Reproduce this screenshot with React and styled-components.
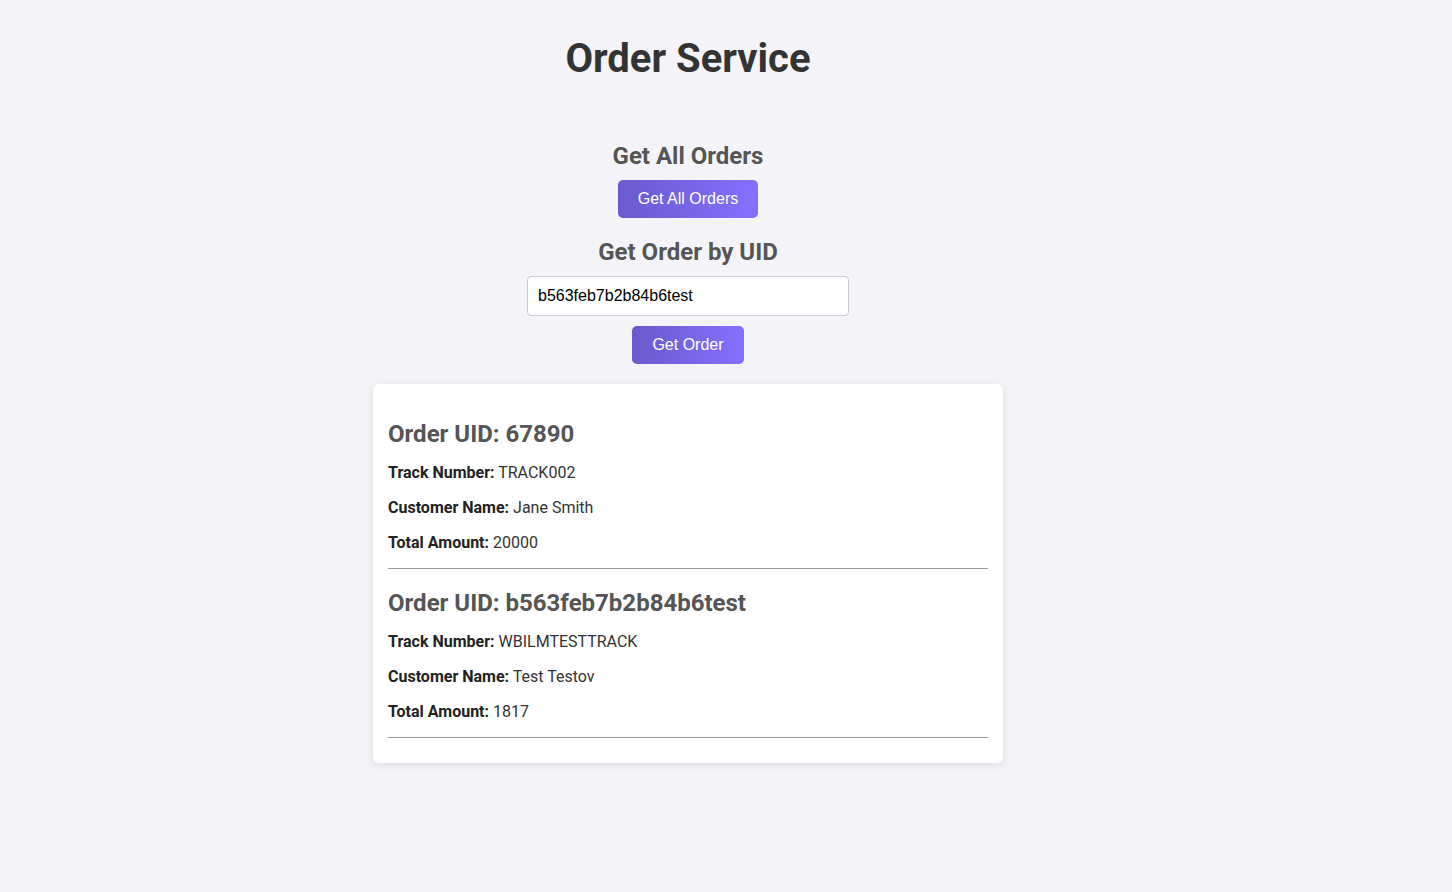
import React, { useState } from "react";
import styled, { createGlobalStyle } from "styled-components";

const GlobalStyle = createGlobalStyle`
  body {
    margin: 0;
    background: #f4f4f8;
    font-family: Roboto, "Liberation Sans", sans-serif;
    color: #333;
  }
`;

const Page = styled.div`
  padding: 35px 96px 40px 20px;
  display: flex;
  flex-direction: column;
  align-items: center;
`;

const Title = styled.h1`
  margin: 0 0 59px;
  font-size: 40px;
  line-height: 48px;
  font-weight: 700;
  color: #333;
`;

const SectionTitle = styled.h2`
  margin: ${(p) => (p.$first ? "0" : "20px")} 0 10px;
  font-size: 24px;
  line-height: 28px;
  font-weight: 700;
  color: #555;
`;

const Button = styled.button`
  height: 38px;
  padding: 0 20px;
  border: none;
  border-radius: 5px;
  background: linear-gradient(90deg, #6a5acd, #8470ff);
  color: #fff;
  font-family: "Liberation Sans", Arial, sans-serif;
  font-size: 16px;
  cursor: pointer;
`;

const Input = styled.input`
  box-sizing: border-box;
  width: 322px;
  height: 40px;
  margin-bottom: 10px;
  padding: 0 10px;
  border: 1px solid #ccc;
  border-radius: 4px;
  background: #fff;
  font-family: "Liberation Sans", Arial, sans-serif;
  font-size: 16px;
  color: #000;
  outline: none;
`;

const Card = styled.div`
  box-sizing: border-box;
  width: 630px;
  margin-top: 20px;
  padding: 16px 15px 25px;
  background: #fff;
  border-radius: 6px;
  box-shadow: 0 2px 8px rgba(0, 0, 0, 0.1);
`;

const OrderTitle = styled.h3`
  margin: 20px 0 15px;
  font-size: 24px;
  line-height: 28px;
  font-weight: 700;
  color: #555;
`;

const Field = styled.p`
  margin: 0 0 16px;
  font-size: 16px;
  line-height: 19px;
  color: #333;

  strong {
    color: #222;
  }
`;

const Divider = styled.hr`
  margin: 0;
  border: none;
  border-top: 1px solid #999;
`;

const orders = [
  { uid: "67890", track: "TRACK002", name: "Jane Smith", amount: 20000 },
  { uid: "b563feb7b2b84b6test", track: "WBILMTESTTRACK", name: "Test Testov", amount: 1817 },
];

export default function App() {
  const [uid, setUid] = useState("b563feb7b2b84b6test");

  return (
    <>
      <GlobalStyle />
      <Page>
        <Title>Order Service</Title>

        <SectionTitle $first>Get All Orders</SectionTitle>
        <Button>Get All Orders</Button>

        <SectionTitle>Get Order by UID</SectionTitle>
        <Input value={uid} onChange={(e) => setUid(e.target.value)} />
        <Button>Get Order</Button>

        <Card>
          {orders.map((o) => (
            <div key={o.uid}>
              <OrderTitle>Order UID: {o.uid}</OrderTitle>
              <Field><strong>Track Number:</strong> {o.track}</Field>
              <Field><strong>Customer Name:</strong> {o.name}</Field>
              <Field><strong>Total Amount:</strong> {o.amount}</Field>
              <Divider />
            </div>
          ))}
        </Card>
      </Page>
    </>
  );
}
